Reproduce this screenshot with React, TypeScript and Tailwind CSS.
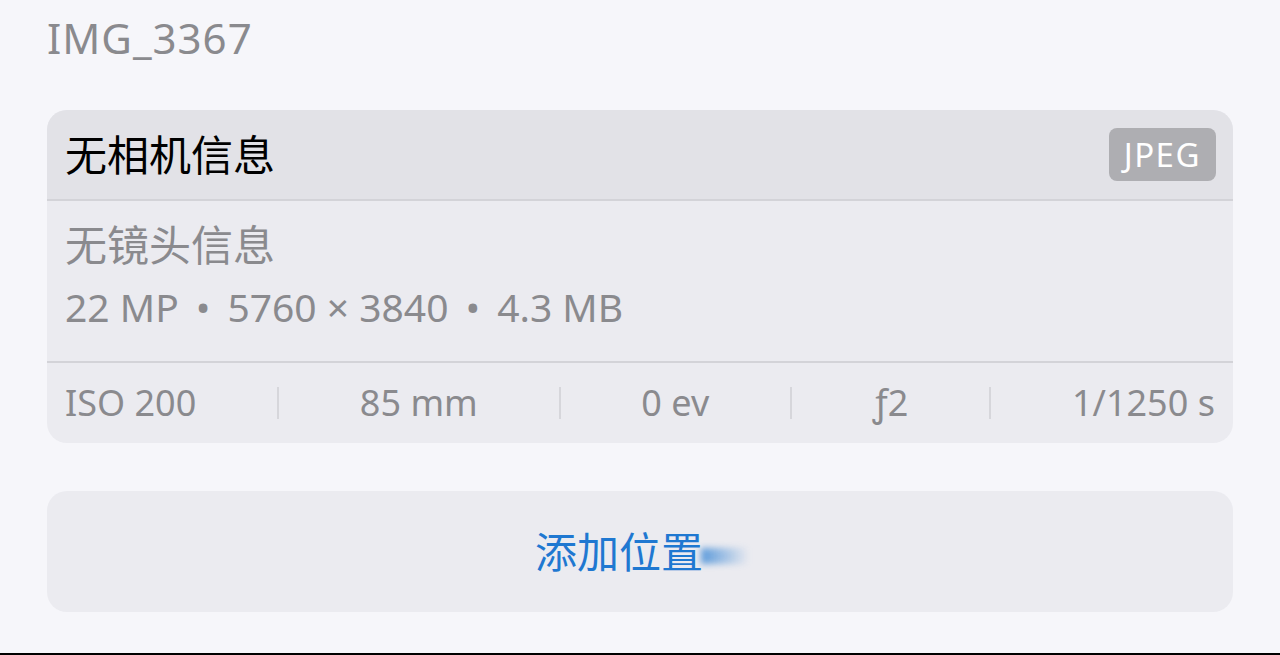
import React from "react";

const font = { fontFamily: '"Noto Sans", "Noto Sans CJK SC", sans-serif' };

const stats = ["ISO 200", "85 mm", "0 ev", "ƒ2", "1/1250 s"];
const specs = ["22 MP", "5760 × 3840", "4.3 MB"];

export default function App() {
    return (
        <div className="w-[1280px] h-[655px] bg-[#f6f6fa] flex flex-col overflow-hidden" style={font}>
            <div className="px-[47px] pt-[12px] h-[110px]">
                <h1 className="text-[42px] leading-[52px] text-[#8a8a8e] tracking-[1px]">IMG_3367</h1>
            </div>

            <div className="mx-[47px] rounded-[20px] bg-[#ebebf0] overflow-hidden">
                <div className="h-[91px] bg-[#e2e2e7] flex items-center justify-between pl-[18px] pr-[17px] border-b-2 border-[#d3d3d8]">
                    <span className="text-[42px] text-black">无相机信息</span>
                    <span className="bg-[#aeaeb2] text-white text-[33px] leading-[53px] px-[15px] rounded-[8px] tracking-[1.5px]">JPEG</span>
                </div>
                <div className="pl-[18px] pt-[20px] pb-[30px] border-b-2 border-[#d3d3d8]">
                    <div className="text-[42px] leading-[48px] text-[#8a8a8e]">无镜头信息</div>
                    <div className="flex items-center gap-[17px] text-[39px] leading-[48px] text-[#8a8a8e] mt-[14px]">
                        {specs.map((s, i) => (
                            <React.Fragment key={s}>
                                {i > 0 && <span>•</span>}
                                <span>{s}</span>
                            </React.Fragment>
                        ))}
                    </div>
                </div>
                <div className="h-[80px] flex items-center justify-between px-[18px] text-[36px] text-[#8a8a8e]">
                    {stats.map((s, i) => (
                        <React.Fragment key={s}>
                            {i > 0 && <div className="w-[2px] h-[32px] bg-[#d6d6db]" />}
                            <span>{s}</span>
                        </React.Fragment>
                    ))}
                </div>
            </div>

            <div className="mx-[47px] mt-[48px] h-[121px] rounded-[20px] bg-[#ebebf0] flex items-center justify-center">
                <div className="flex items-center pl-[4px]">
                    <span className="text-[42px] text-[#1f78d1]">添加位置</span>
                    <span className="w-[48px] h-[16px] mt-[8px] -ml-[2px] bg-gradient-to-r from-[#1f78d1]/70 to-transparent blur-[3px]" />
                </div>
            </div>

            <div className="flex-1" />
            <div className="h-[2px] bg-black" />
        </div>
    );
}
